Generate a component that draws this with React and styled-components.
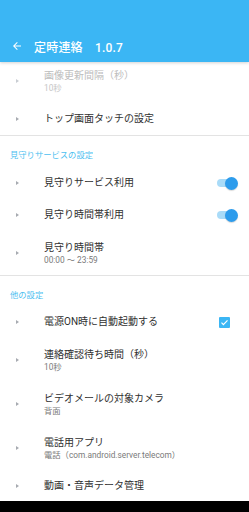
import React from "react"
import styled, { createGlobalStyle } from "styled-components"

const GlobalStyle = createGlobalStyle`
  html, body, #root {
    margin: 0;
    padding: 0;
    height: 100%;
  }
  body {
    font-family: Roboto, "Noto Sans CJK JP", sans-serif;
    background: #ffffff;
    overflow: hidden;
  }
`

const Screen = styled.div`
  height: 100%;
  display: flex;
  flex-direction: column;
  overflow: hidden;
`

const AppBar = styled.header`
  position: relative;
  z-index: 2;
  height: 62px;
  flex-shrink: 0;
  background: #3bb6f4;
  display: flex;
  align-items: flex-end;
  box-shadow: 0 1px 3px rgba(0, 0, 0, 0.18);
`

const Toolbar = styled.div`
  height: 32px;
  width: 100%;
  display: flex;
  align-items: center;
  padding-left: 11px;
  box-sizing: border-box;
  color: #ffffff;
`

const BackButton = styled.span`
  display: flex;
  width: 12px;
  height: 12px;
  margin-right: 11px;
`

const Title = styled.h1`
  margin: 0;
  font-size: 12px;
  font-weight: 500;
  letter-spacing: 0.2px;
  white-space: pre;
`

const List = styled.main`
  flex: 1;
  margin-top: -3px;
  overflow: hidden;
`

const Row = styled.div`
  height: ${({ twoLine }) => (twoLine ? 44 : 32)}px;
  display: flex;
  align-items: center;
`

const Chevron = styled.span`
  width: 44px;
  flex-shrink: 0;
  display: flex;
  padding-left: 16px;
  box-sizing: border-box;
  &::before {
    content: "";
    border-left: 3px solid ${({ disabled }) => (disabled ? "#c9cdd3" : "#a7abb1")};
    border-top: 2.5px solid transparent;
    border-bottom: 2.5px solid transparent;
  }
`

const Texts = styled.div`
  flex: 1;
  display: flex;
  flex-direction: column;
  min-width: 0;
`

const Primary = styled.span`
  font-size: 10px;
  line-height: 14px;
  color: ${({ disabled }) => (disabled ? "#bdbdbd" : "#303030")};
  white-space: nowrap;
`

const Secondary = styled.span`
  font-size: 8.3px;
  line-height: 11px;
  color: ${({ disabled }) => (disabled ? "#c6c6c6" : "#7a7a7a")};
  white-space: nowrap;
`

const Divider = styled.hr`
  margin: 0;
  border: none;
  height: 1px;
  background: #e3e3e3;
`

const SectionHeader = styled.div`
  height: ${({ h }) => h}px;
  box-sizing: border-box;
  padding: 14px 0 0 10px;
  font-size: 8.3px;
  line-height: 10px;
  color: #4cc0f0;
`

const Widget = styled.div`
  width: 44px;
  flex-shrink: 0;
  display: flex;
  align-items: center;
  justify-content: flex-start;
`

const Switch = styled.span`
  position: relative;
  width: 18px;
  height: 8px;
  margin-left: 12px;
  border-radius: 4px;
  background: #a9dbf8;
  &::after {
    content: "";
    position: absolute;
    right: -3px;
    top: -2.5px;
    width: 13px;
    height: 13px;
    border-radius: 50%;
    background: #2d9cec;
    box-shadow: 0 1px 1px rgba(0, 0, 0, 0.15);
  }
`

const CheckBox = styled.span`
  width: 11px;
  height: 11px;
  margin-left: 14px;
  border-radius: 1px;
  background: #3bb6f4;
  display: flex;
  align-items: center;
  justify-content: center;
`

const NavBar = styled.div`
  height: 11px;
  flex-shrink: 0;
  background: #000000;
`

const BackArrow = () => (
  <svg width="12" height="12" viewBox="0 0 24 24" fill="#ffffff">
    <path d="M20 11H7.83l5.59-5.59L12 4l-8 8 8 8 1.41-1.41L7.83 13H20v-2z" />
  </svg>
)

const Check = () => (
  <svg width="9" height="9" viewBox="0 0 24 24" fill="none" stroke="#ffffff" strokeWidth="3.2">
    <path d="M4 12.5l5 5L20 6.5" />
  </svg>
)

const Item = ({ title, summary, disabled, widget }) => (
  <Row twoLine={!!summary}>
    <Chevron disabled={disabled} />
    <Texts>
      <Primary disabled={disabled}>{title}</Primary>
      {summary && <Secondary disabled={disabled}>{summary}</Secondary>}
    </Texts>
    {widget && <Widget>{widget}</Widget>}
  </Row>
)

export default function App() {
  return (
    <>
      <GlobalStyle />
      <Screen>
        <AppBar>
          <Toolbar>
            <BackButton>
              <BackArrow />
            </BackButton>
            <Title>{"定時連絡　1.0.7"}</Title>
          </Toolbar>
        </AppBar>
        <List>
          <Item title="画像更新間隔（秒）" summary="10秒" disabled />
          <Item title="トップ画面タッチの設定" />
          <Divider />
          <SectionHeader h={31}>見守りサービスの設定</SectionHeader>
          <Item title="見守りサービス利用" widget={<Switch />} />
          <Item title="見守り時間帯利用" widget={<Switch />} />
          <Item title="見守り時間帯" summary="00:00 〜 23:59" />
          <Divider />
          <SectionHeader h={30}>他の設定</SectionHeader>
          <Item
            title="電源ON時に自動起動する"
            widget={
              <CheckBox>
                <Check />
              </CheckBox>
            }
          />
          <Item title="連絡確認待ち時間（秒）" summary="10秒" />
          <Item title="ビデオメールの対象カメラ" summary="背面" />
          <Item title="電話用アプリ" summary="電話（com.android.server.telecom）" />
          <Item title="動画・音声データ管理" />
        </List>
        <NavBar />
      </Screen>
    </>
  )
}
